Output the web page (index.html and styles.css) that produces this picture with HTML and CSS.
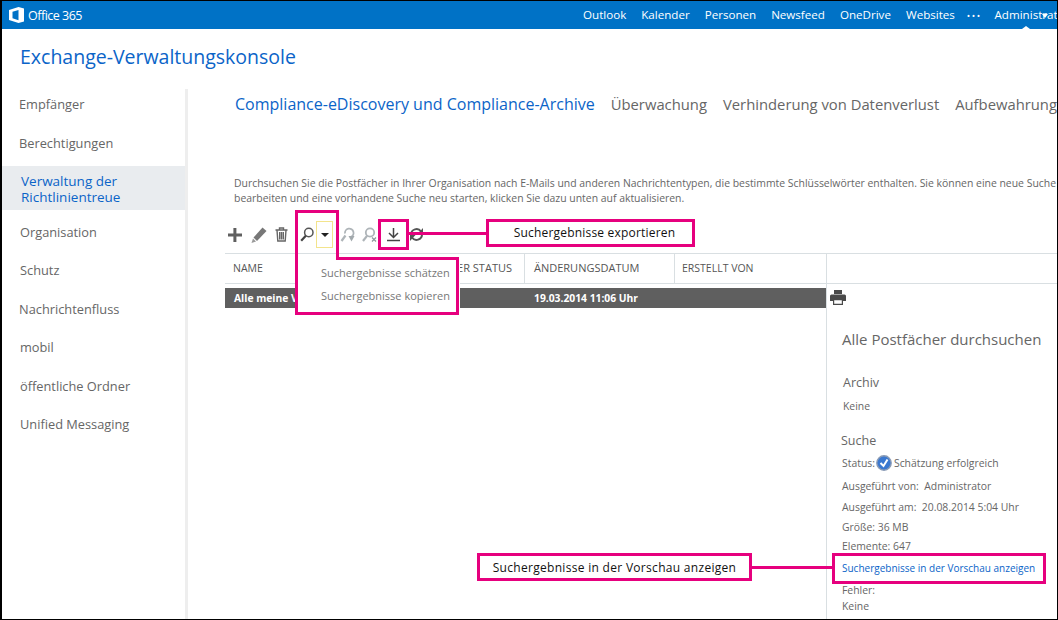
FILE: index.html
```html
<!DOCTYPE html>
<html lang="de">
<head>
    <meta charset="UTF-8">
    <title>Exchange-Verwaltungskonsole</title>
    <link rel="stylesheet" href="styles.css">
</head>
<body>
<div class="page">

    <!-- Office 365 bar -->
    <header class="topbar">
        <div class="logo">
            <svg width="15" height="16" viewBox="0 0 15 16"><path fill="#fff" fill-rule="evenodd" d="M0 3 9.500 0 15 1.500V14.500L9.500 16 0 13ZM3.500 4.800V11.300L9.500 13.300V3Z"/></svg>
            <span>Office 365</span>
        </div>
        <nav class="topnav">
            <a>Outlook</a>
            <a>Kalender</a>
            <a>Personen</a>
            <a>Newsfeed</a>
            <a>OneDrive</a>
            <a>Websites</a>
            <a class="dots">•••</a>
            <a class="admin">Administrator</a>
        </nav>
        <i class="admin-caret"></i>
        <i class="admin-notch"></i>
    </header>

    <h1 class="title">Exchange-Verwaltungskonsole</h1>

    <div class="layout">
        <!-- Left navigation -->
        <ul class="sidenav">
            <li>Empfänger</li>
            <li>Berechtigungen</li>
            <li class="active">Verwaltung der Richtlinientreue</li>
            <li>Organisation</li>
            <li>Schutz</li>
            <li>Nachrichtenfluss</li>
            <li>mobil</li>
            <li>öffentliche Ordner</li>
            <li>Unified Messaging</li>
        </ul>

        <main class="content">
            <div class="tabs">
                <span class="tab current">Compliance-eDiscovery und Compliance-Archive</span>
                <span class="tab">Überwachung</span>
                <span class="tab">Verhinderung von Datenverlust</span>
                <span class="tab">Aufbewahrungsrichtlinien</span>
            </div>

            <p class="intro">Durchsuchen Sie die Postfächer in Ihrer Organisation nach E-Mails und anderen Nachrichtentypen, die bestimmte Schlüsselwörter enthalten. Sie können eine neue Suche erstellen,<br>bearbeiten und eine vorhandene Suche neu starten, klicken Sie dazu unten auf aktualisieren.</p>

            <!-- Toolbar -->
            <div class="toolbar">
                <svg class="tool" width="16" height="16" viewBox="0 0 16 16"><path fill="#5f5f5f" d="M6.400 1h3v5.400H15v3H9.400V15h-3V9.400H1v-3h5.400Z"/></svg>
                <svg class="tool pencil" width="16" height="16" viewBox="0 0 16 16"><path fill="#777" d="M11.500 0.500 15.500 4 6 14 2.500 10.500Z"/><path fill="#9a9a9a" d="M2 11.500 5 14.500 0.500 16Z"/></svg>
                <svg class="tool trash" width="13" height="15" viewBox="0 0 13 15"><path fill="none" stroke="#666" stroke-width="1.400" d="M0.500 3H12.500M4.500 3V1H8.500V3M2 3 2.800 14H10.200L11 3M4.700 5V12.500M6.500 5V12.500M8.300 5V12.500"/></svg>
                <svg class="tool search" width="14" height="16" viewBox="0 0 14 16"><circle cx="8.800" cy="5.500" r="4.200" fill="none" stroke="#555" stroke-width="1.500"/><path stroke="#444" stroke-width="2.200" d="M5.800 8.800 1.200 13.800"/></svg>
                <span class="drop"><i class="caret"></i></span>
                <svg class="tool start" width="16" height="16" viewBox="0 0 16 16"><path fill="none" stroke="#aeb4b8" stroke-width="1.800" d="M10.500 10A4.300 4.300 0 1 0 5 6.500"/><path stroke="#aeb4b8" stroke-width="2.200" d="M5.500 8.500 1.500 14"/><path fill="#a2a9ad" d="M8.500 9 14.500 9 11.500 14.500Z"/></svg>
                <svg class="tool stop" width="16" height="16" viewBox="0 0 16 16"><circle cx="8" cy="5.500" r="4.200" fill="none" stroke="#aeb4b8" stroke-width="1.800"/><path stroke="#aeb4b8" stroke-width="2.200" d="M5 8.800 1 14"/><path stroke="#8f979c" stroke-width="1.300" d="M10 10.500 14 14.500M14 10.500 10 14.500"/></svg>
                <svg class="tool export" width="15" height="15" viewBox="0 0 15 15"><path fill="none" stroke="#444" stroke-width="1.500" d="M7.500 1V10M3 6 7.500 10.500 12 6"/><path stroke="#444" stroke-width="1.500" d="M1 13.500H14"/></svg>
                <svg class="tool refresh" width="15" height="15" viewBox="0 0 15 15"><path fill="none" stroke="#555" stroke-width="2" d="M2 7.500A5.500 5.500 0 0 1 12 4.500M13 7.500A5.500 5.500 0 0 1 3 10.500"/><path fill="#555" d="M14 1V7H8.500ZM1 14V8H6.500Z"/></svg>
            </div>

            <div class="results">
                <div class="list">
                    <div class="thead">
                        <span class="col-name">NAME</span>
                        <span class="col-status">FILTER STATUS</span>
                        <span class="col-date">ÄNDERUNGSDATUM</span>
                        <span class="col-by">ERSTELLT VON</span>
                    </div>
                    <div class="row">
                        <span class="col-name">Alle meine Vorgänge</span>
                        <span class="col-status"></span>
                        <span class="col-date">19.03.2014 11:06 Uhr</span>
                        <span class="col-by"></span>
                    </div>
                </div>

                <!-- Details pane -->
                <aside class="details">
                    <div class="details-head"></div>
                    <svg class="printer" width="16" height="15" viewBox="0 0 16 15"><path fill="#4a4a4a" d="M4 0H12V4H4ZM1.500 4.500H14.500Q16 4.500 16 6V11H13V9H3V11H0V6Q0 4.500 1.500 4.500Z"/><path fill="none" stroke="#4a4a4a" stroke-width="1.200" d="M3.600 9.600H12.400V14.400H3.600Z"/></svg>
                    <h2 class="details-title">Alle Postfächer durchsuchen</h2>
                    <h3 class="archive-head">Archiv</h3>
                    <p class="archive-value">Keine</p>
                    <h3 class="search-head">Suche</h3>
                    <p class="status-line">Status:
                        <svg class="check" width="16" height="16" viewBox="0 0 16 16"><circle cx="8" cy="8" r="7.200" fill="#3a78d0" stroke="#8a9bb5" stroke-width="1.400"/><path fill="none" stroke="#fff" stroke-width="2" d="M4.500 8 7.500 11 11.500 4.500"/></svg>
                        Schätzung erfolgreich</p>
                    <p class="line">Ausgeführt von:&nbsp; Administrator</p>
                    <p class="line run-date">Ausgeführt am:&nbsp; 20.08.2014 5:04 Uhr</p>
                    <p class="line size">Größe: 36 MB</p>
                    <p class="line">Elemente: 647</p>
                    <a class="preview">Suchergebnisse in der Vorschau anzeigen</a>
                    <p class="line plain">Fehler:</p>
                    <p class="line plain">Keine</p>
                </aside>
            </div>
        </main>
    </div>

    <!-- Dropdown menu that hangs off the search button -->
    <div class="menu">
        <div>Suchergebnisse schätzen</div>
        <div>Suchergebnisse kopieren</div>
    </div>

    <!-- Magenta annotations -->
    <div class="mark mark-search"></div>
    <div class="mark mark-export"></div>
    <div class="mark mark-preview"></div>
    <div class="wire wire-export"></div>
    <div class="wire wire-preview"></div>
    <div class="callout callout-export">Suchergebnisse exportieren</div>
    <div class="callout callout-preview">Suchergebnisse in der Vorschau anzeigen</div>
</div>
</body>
</html>
```

FILE: styles.css
```css
* {
    box-sizing: border-box;
}

html, body {
    margin: 0;
    padding: 0;
    background-color: #fff;
}

.page {
    position: relative;
    width: 1058px;
    height: 620px;
    overflow: hidden;
    border: 1px solid #000;
    border-left-width: 2px;
    font-family: "Open Sans", "Noto Sans", sans-serif;
    color: #666;
}

.topbar {
    position: relative;
    display: flex;
    justify-content: space-between;
    align-items: center;
    height: 28px;
    background-color: #0072c6;
    color: #fff;
    font-size: 11.600px;
}

.logo {
    display: flex;
    align-items: center;
    gap: 4px;
    padding-left: 7px;
    font-size: 12.500px;
    letter-spacing: -0.500px;
}

.topnav {
    display: flex;
    flex-shrink: 0;
    width: 474px;
    gap: 15px;
    white-space: nowrap;
    overflow: hidden;
}

.topnav .dots {
    margin: 0 -2px 0 -3px;
    font-size: 9px;
    line-height: 17px;
    letter-spacing: 1.500px;
}

.admin-caret {
    position: absolute;
    right: 9px;
    top: 13px;
    border-left: 3px solid transparent;
    border-right: 3px solid transparent;
    border-top: 4px solid #fff;
}

.admin-notch {
    position: absolute;
    left: 1020px;
    bottom: 0;
    border-left: 4px solid transparent;
    border-right: 4px solid transparent;
    border-bottom: 3px solid #fff;
}

.title {
    margin: 0;
    padding: 14px 0 0 18px;
    height: 56px;
    font-size: 19.500px;
    line-height: 28px;
    font-weight: 400;
    color: #0b64c8;
}

.layout {
    display: flex;
    height: 534px;
}

.sidenav {
    flex: none;
    width: 186px;
    margin: 4px 0 0;
    padding: 0;
    list-style: none;
    border-right: 3px solid #eee;
    font-size: 12.800px;
}

.sidenav li {
    height: 38.500px;
    padding: 0 0 0 18px;
    line-height: 30px;
}

.sidenav li:nth-child(-n+2), .sidenav li:nth-child(6) {
    padding-left: 17px;
}

.sidenav li.active {
    height: 44px;
    margin-bottom: 6.500px;
    padding: 7px 50px 0 19px;
    font-size: 13.500px;
    line-height: 16px;
    color: #0b64c8;
    background-color: #e9ecef;
}

.content {
    flex: 1;
    min-width: 0;
    padding: 0 0 0 37px;
    overflow: hidden;
}

.tabs {
    display: flex;
    gap: 16px;
    padding: 0 0 0 10px;
    margin-top: 7px;
    height: 84px;
    font-size: 14.800px;
    line-height: 24px;
    white-space: nowrap;
}

.tab.current {
    font-size: 16px;
    color: #0b64c8;
}

.intro {
    margin: 0;
    height: 42px;
    padding-left: 9px;
    font-size: 10.430px;
    line-height: 15px;
    white-space: nowrap;
}

.toolbar {
    display: flex;
    align-items: center;
    height: 35px;
    padding: 0 0 2px 2px;
}

.tool {
    flex: none;
}

.pencil {
    margin-left: 8px;
}

.trash {
    margin-left: 8px;
}

.search {
    margin-left: 12px;
}

.drop {
    display: flex;
    justify-content: center;
    align-items: center;
    width: 17px;
    height: 27px;
    margin-left: 2px;
    border: 1px solid #f3e48c;
}

.caret {
    width: 0;
    height: 0;
    border-left: 4px solid transparent;
    border-right: 4px solid transparent;
    border-top: 4px solid #222;
}

.start {
    margin-left: 7px;
}

.stop {
    margin-left: 6px;
}

.export {
    margin-left: 8px;
}

.refresh {
    margin-left: 8px;
}

.results {
    display: flex;
}

.list {
    flex: none;
    width: 601px;
}

.thead, .row {
    display: grid;
    grid-template-columns: 195px 105px 150px 151px;
    align-items: center;
}

.thead {
    height: 31px;
    border-top: 1px solid #d9dfe2;
    border-bottom: 1px solid #d9dfe2;
    font-size: 10.500px;
    color: #555;
}

.thead span {
    height: 29px;
    padding-left: 8px;
    line-height: 28px;
    border-right: 1px solid #d9dfe2;
}

.thead .col-name {
    border-right: none;
}

.thead .col-status {
    text-align: right;
    padding-right: 12px;
    font-size: 11px;
    white-space: nowrap;
}

.thead .col-date {
    padding-left: 9px;
    font-size: 11px;
}

.thead .col-by {
    padding-left: 7px;
    border-right: none;
}

.row {
    height: 20px;
    margin-top: 4px;
    background-color: #5f5f5f;
    color: #fff;
    font-size: 10.300px;
    font-weight: 700;
    white-space: nowrap;
}

.row span {
    padding-left: 9px;
    overflow: hidden;
}

.details {
    flex: none;
    width: 231px;
    height: 366px;
    border-left: 1px solid #d9dfe2;
    padding-left: 15px;
    font-size: 10.400px;
    white-space: nowrap;
}

.details-head {
    height: 31px;
    margin-left: -15px;
    border-top: 1px solid #d9dfe2;
    border-bottom: 1px solid #d9dfe2;
}

.printer {
    display: block;
    margin: 6px 0 0 -12px;
}

.details-title {
    margin: 0;
    padding-top: 22px;
    font-size: 15px;
    line-height: 24px;
    font-weight: 400;
}

.archive-head {
    margin: 0;
    padding: 23px 0 0 1px;
    font-size: 12.500px;
    line-height: 18px;
    font-weight: 400;
}

.archive-value {
    margin: 7px 0 0 1px;
    line-height: 14px;
}

.search-head {
    margin: 0 0 0 -1px;
    padding-top: 19px;
    font-size: 12.500px;
    line-height: 18px;
    font-weight: 400;
}

.status-line {
    display: flex;
    align-items: center;
    gap: 2px;
    height: 23px;
    margin: 1px 0 2px;
}

.check {
    margin-left: -1px;
}

.line {
    margin: 0;
    height: 21px;
    line-height: 21px;
}

.line.run-date {
    height: 20px;
}

.line.size {
    height: 19px;
    line-height: 20px;
}

.line.plain {
    height: 16px;
    line-height: 16px;
}

.preview {
    display: block;
    height: 25px;
    line-height: 22px;
    color: #0b64c8;
    font-size: 10px;
}

.menu {
    position: absolute;
    left: 296px;
    top: 258px;
    width: 162px;
    height: 55px;
    padding: 2px 0 0 23px;
    background-color: #fff;
    color: #777;
    font-size: 11px;
    line-height: 23px;
    white-space: nowrap;
}

.mark, .wire, .callout {
    position: absolute;
    border: 3px solid #e6007e;
}

.mark-search {
    left: 293px;
    top: 209px;
    width: 164px;
    height: 105px;
    clip-path: polygon(0 0, 44px 0, 44px 47px, 100% 47px, 100% 100%, 0 100%);
    border: none;
    background: linear-gradient(#e6007e, #e6007e) 0 0 / 44px 3px no-repeat,
        linear-gradient(#e6007e, #e6007e) 0 0 / 3px 100% no-repeat,
        linear-gradient(#e6007e, #e6007e) 41px 0 / 3px 50px no-repeat,
        linear-gradient(#e6007e, #e6007e) 41px 47px / 123px 3px no-repeat,
        linear-gradient(#e6007e, #e6007e) 100% 0 / 3px 100% no-repeat,
        linear-gradient(#e6007e, #e6007e) 0 100% / 100% 3px no-repeat;
}

.mark-export {
    left: 376px;
    top: 218px;
    width: 31px;
    height: 31px;
}

.mark-preview {
    left: 830px;
    top: 552px;
    width: 214px;
    height: 31px;
}

.wire {
    height: 3px;
    border-width: 3px 0 0;
}

.wire-export {
    left: 407px;
    top: 231px;
    width: 78px;
}

.wire-preview {
    left: 749px;
    top: 565px;
    width: 81px;
}

.callout {
    background-color: #fff;
    color: #111;
    font-size: 12px;
    text-align: center;
    white-space: nowrap;
}

.callout-export {
    left: 484px;
    top: 218px;
    width: 209px;
    height: 28px;
    padding-left: 8px;
    line-height: 22px;
    letter-spacing: 0.200px;
}

.callout-preview {
    left: 475px;
    top: 552px;
    width: 275px;
    height: 28px;
    line-height: 23px;
    letter-spacing: 0.300px;
}
```
